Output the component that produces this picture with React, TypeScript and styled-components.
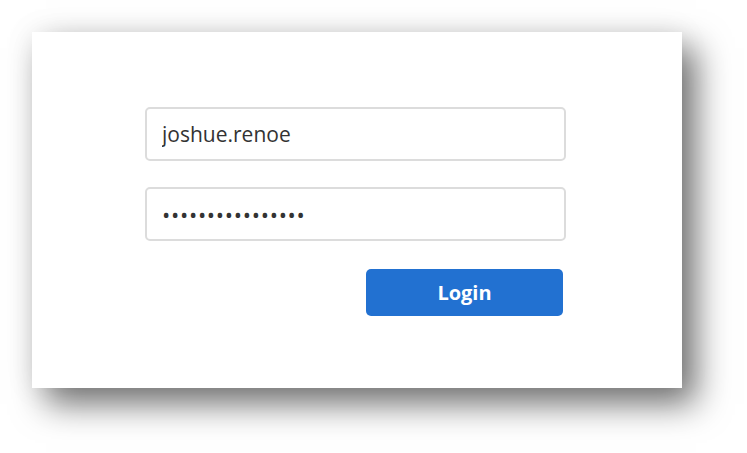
import React from "react";
import styled, { createGlobalStyle } from "styled-components";

const GlobalStyle = createGlobalStyle`
  html, body {
    margin: 0;
    padding: 0;
    background: #ffffff;
  }
  body {
    font-family: "Open Sans", "Noto Sans", sans-serif;
  }
`;

const Page = styled.div`
  width: 747px;
  height: 453px;
  padding: 32px 0 0 32px;
  box-sizing: border-box;
  overflow: hidden;
`;

const Card = styled.div`
  width: 650px;
  height: 356px;
  box-sizing: border-box;
  background: #ffffff;
  padding: 75px 0 0 113px;
  box-shadow: 14px 16px 32px rgba(0, 0, 0, 0.55), 0 0 30px rgba(0, 0, 0, 0.07);
`;

const Form = styled.form`
  width: 421px;
  display: flex;
  flex-direction: column;
`;

const Field = styled.input<{ $size?: number; $spacing?: number }>`
  height: 54px;
  box-sizing: border-box;
  border: 2px solid #dcdcdc;
  border-radius: 5px;
  padding: 0 15px;
  margin-bottom: 26px;
  font-family: "Open Sans", "Noto Sans", sans-serif;
  font-size: ${({ $size }) => $size ?? 21}px;
  color: #333333;
  letter-spacing: ${({ $spacing }) => $spacing ?? 0}px;
  background: #ffffff;

  &:focus {
    outline: none;
  }
`;

const Actions = styled.div`
  display: flex;
  justify-content: flex-end;
  padding-right: 3px;
  margin-top: 2px;
`;

const LoginButton = styled.button`
  width: 197px;
  height: 47px;
  border: none;
  border-radius: 5px;
  background: #2271d1;
  color: #ffffff;
  font-family: "Open Sans", "Noto Sans", sans-serif;
  font-weight: 700;
  font-size: 20px;
  cursor: pointer;
`;

export default function App() {
  return (
    <>
      <GlobalStyle />
      <Page>
        <Card>
          <Form onSubmit={(e) => e.preventDefault()}>
            <Field type="text" defaultValue="joshue.renoe" />
            <Field type="password" defaultValue="passwordpassword" $size={22} $spacing={0.7} />
            <Actions>
              <LoginButton type="submit">Login</LoginButton>
            </Actions>
          </Form>
        </Card>
      </Page>
    </>
  );
}
